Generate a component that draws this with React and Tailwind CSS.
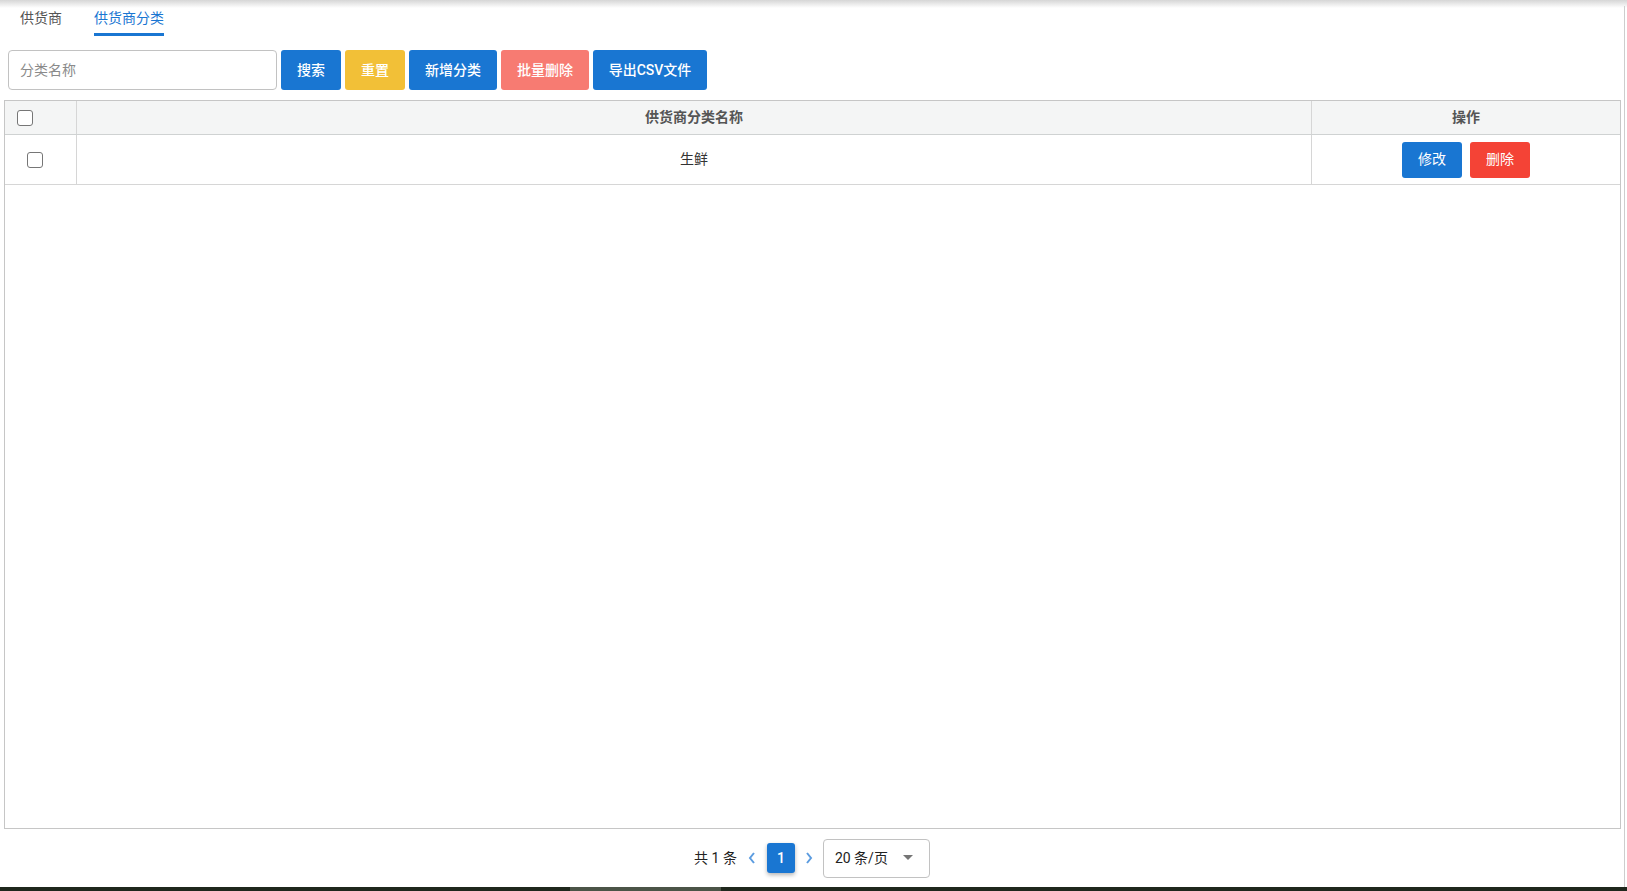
const font = { fontFamily: 'Roboto, "Noto Sans CJK SC", sans-serif' };

function Box() {
  return <span className="block w-[16px] h-[16px] rounded-[3px] border-[1.5px] border-[#767676] bg-white" />;
}

function Btn({ children, className }) {
  return (
    <button className={`h-[40px] rounded-[3px] text-white text-[14px] font-medium ${className}`}>
      {children}
    </button>
  );
}

export default function App() {
  return (
    <div className="relative h-[891px] w-full flex flex-col bg-white overflow-hidden" style={font}>
      <div className="absolute top-0 left-0 right-0 h-[8px] bg-gradient-to-b from-[#d6d6d6] to-transparent pointer-events-none" />
      <div className="flex flex-1 min-h-0">
        <div className="flex-1 flex flex-col min-w-0">
          <div className="h-[36px] flex items-stretch pl-[20px] gap-[32px] text-[14px]">
            <div className="flex items-center text-[#555]">供货商</div>
            <div className="flex items-center text-[#1976d2] border-b-[3px] border-[#1976d2] pt-[3px]">供货商分类</div>
          </div>
          <div className="mt-[14px] pl-[8px] flex gap-[4px]">
            <div className="w-[269px] h-[40px] rounded-[4px] border border-[#c2c2c2] flex items-center pl-[11px] text-[14px] text-[#8a8a8a]">
              分类名称
            </div>
            <Btn className="w-[60px] bg-[#1976d2]">搜索</Btn>
            <Btn className="w-[60px] bg-[#f2c037]">重置</Btn>
            <Btn className="w-[88px] bg-[#1976d2]">新增分类</Btn>
            <Btn className="w-[88px] bg-[#f77b72]">批量删除</Btn>
            <Btn className="w-[114px] bg-[#1976d2]">导出CSV文件</Btn>
          </div>
          <div className="mt-[10px] ml-[4px] mr-[3px] flex-1 border border-[#c6c6c6] flex flex-col">
            <div className="h-[34px] flex bg-[#f4f5f5] border-b border-[#cfd2d2] text-[14px] font-semibold text-[#555]">
              <div className="w-[72px] border-r border-[#d6d6d6] flex items-center pl-[12px]">
                <Box />
              </div>
              <div className="flex-1 border-r border-[#d6d6d6] flex items-center justify-center">供货商分类名称</div>
              <div className="w-[308px] flex items-center justify-center">操作</div>
            </div>
            <div className="h-[50px] flex border-b border-[#d6d6d6] text-[14px] text-[#333]">
              <div className="w-[72px] border-r border-[#d6d6d6] flex items-center pl-[22px]">
                <Box />
              </div>
              <div className="flex-1 border-r border-[#d6d6d6] flex items-center justify-center">生鲜</div>
              <div className="w-[308px] flex items-center justify-center gap-[8px]">
                <button className="w-[60px] h-[36px] rounded-[3px] bg-[#1976d2] text-white text-[14px]">修改</button>
                <button className="w-[60px] h-[36px] rounded-[3px] bg-[#f44336] text-white text-[14px]">删除</button>
              </div>
            </div>
          </div>
          <div className="h-[58px] flex items-center justify-center text-[14px] text-[#222]">
            <span className="mr-[10px]">共 1 条</span>
            <svg width="10" height="14" viewBox="0 0 10 14" className="mr-[10px]">
              <path d="M7 2 L3 7 L7 12" fill="none" stroke="#5c9ce0" strokeWidth="2" />
            </svg>
            <span className="w-[28px] h-[30px] rounded-[3px] bg-[#1976d2] text-white font-medium flex items-center justify-center shadow-[0_2px_4px_rgba(0,0,0,0.3)]">
              1
            </span>
            <svg width="10" height="14" viewBox="0 0 10 14" className="ml-[9px] mr-[9px]">
              <path d="M3 2 L7 7 L3 12" fill="none" stroke="#5c9ce0" strokeWidth="2" />
            </svg>
            <div className="w-[107px] h-[39px] rounded-[4px] border border-[#c2c2c2] flex items-center pl-[11px] pr-[16px] justify-between">
              <span>20 条/页</span>
              <svg width="10" height="6" viewBox="0 0 10 6">
                <path d="M0 0 L10 0 L5 5 Z" fill="#757575" />
              </svg>
            </div>
          </div>
        </div>
        <div className="w-[1px] bg-[#cdcdcd] mt-[6px]" />
        <div className="w-[2px]" />
      </div>
      <div className="h-[4px] bg-[#1f281d] flex">
        <div className="w-[570px]" />
        <div className="w-[151px] bg-[#4b5447]" />
      </div>
    </div>
  );
}
